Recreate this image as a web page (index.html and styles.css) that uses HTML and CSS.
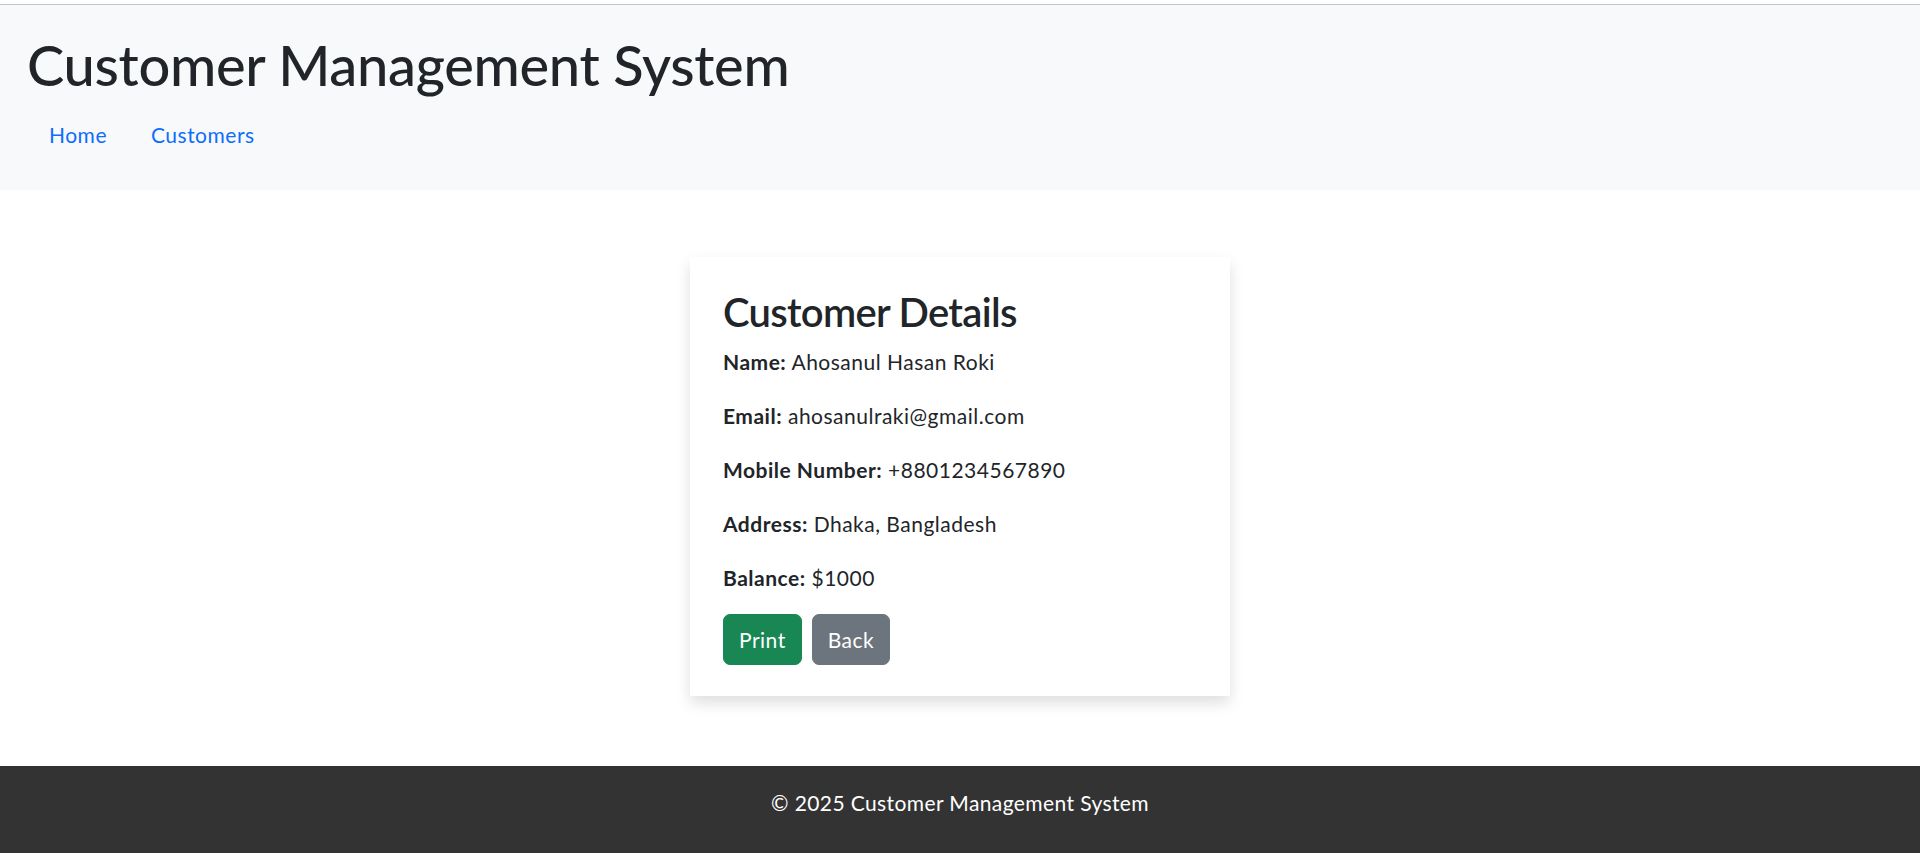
FILE: index.html
```html
<!DOCTYPE html>
<html lang="en">
<head>
<meta charset="utf-8">
<title>Customer Details</title>
<link rel="stylesheet" href="styles.css">
</head>
<body>
<header class="site-header">
  <h1 class="site-title">Customer Management System</h1>
  <nav class="site-nav">
    <a class="nav-link" href="#">Home</a>
    <a class="nav-link" href="#">Customers</a>
  </nav>
</header>
<main class="main">
  <section class="card">
    <h2 class="card-title">Customer Details</h2>
    <p class="row"><strong>Name:</strong> Ahosanul Hasan Roki</p>
    <p class="row"><strong>Email:</strong> ahosanulraki@gmail.com</p>
    <p class="row"><strong>Mobile Number:</strong> +8801234567890</p>
    <p class="row"><strong>Address:</strong> Dhaka, Bangladesh</p>
    <p class="row last"><strong>Balance:</strong> $1000</p>
    <div class="actions">
      <button class="btn btn-print" type="button">Print</button>
      <button class="btn btn-back" type="button">Back</button>
    </div>
  </section>
</main>
<footer class="site-footer">
  <p class="footer-text">© 2025 Customer Management System</p>
</footer>
</body>
</html>
```
FILE: styles.css
```css
* { box-sizing: border-box; }
html, body { margin: 0; padding: 0; }
body {
  font-family: Lato, "Open Sans", sans-serif;
  font-size: 21px;
  line-height: 32px;
  letter-spacing: 0.5px;
  color: #212529;
  background: #fff;
}
.site-header {
  margin-top: 4px;
  border-top: 1px solid #c6c6c6;
  background: #f8f9fa;
  padding: 26px 27px 28px;
  height: 186px;
}
.site-title {
  margin: 0 0 11px;
  font-size: 56px;
  line-height: 1.2;
  font-weight: 500;
  letter-spacing: -0.3px;
  color: #212529;
}
.site-nav {
  display: flex;
}
.nav-link {
  display: block;
  padding: 10px 22px;
  color: #0d6efd;
  text-decoration: none;
  font-size: 21px;
  line-height: 31px;
}
.main {
  display: flex;
  justify-content: center;
  padding: 67px 0 70px;
}
.card {
  width: 540px;
  background: #fff;
  padding: 31px 33px 31px;
  box-shadow: 0 7px 14px rgba(0,0,0,0.13);
}
.card-title {
  margin: 0 0 10px;
  font-size: 40px;
  line-height: 1.2;
  font-weight: 600;
  letter-spacing: -0.7px;
}
.row {
  margin: 0 0 22px;
}
.row.last { margin-bottom: 20px; }
.row strong { font-weight: 700; }
.actions {
  display: flex;
  gap: 10px;
}
.btn {
  font-family: inherit;
  font-size: 21px;
  line-height: 32px;
  letter-spacing: 0.5px;
  padding: 8.5px 15px;
  border: 1px solid transparent;
  border-radius: 7px;
  color: #fff;
  cursor: pointer;
}
.btn-print { background: #198754; border-color: #198754; }
.btn-back { background: #6c757d; border-color: #6c757d; }
.site-footer {
  background: #333333;
  color: #fff;
  text-align: center;
  padding: 21px 0 36px;
}
.footer-text { margin: 0; letter-spacing: 0.4px; }
```
